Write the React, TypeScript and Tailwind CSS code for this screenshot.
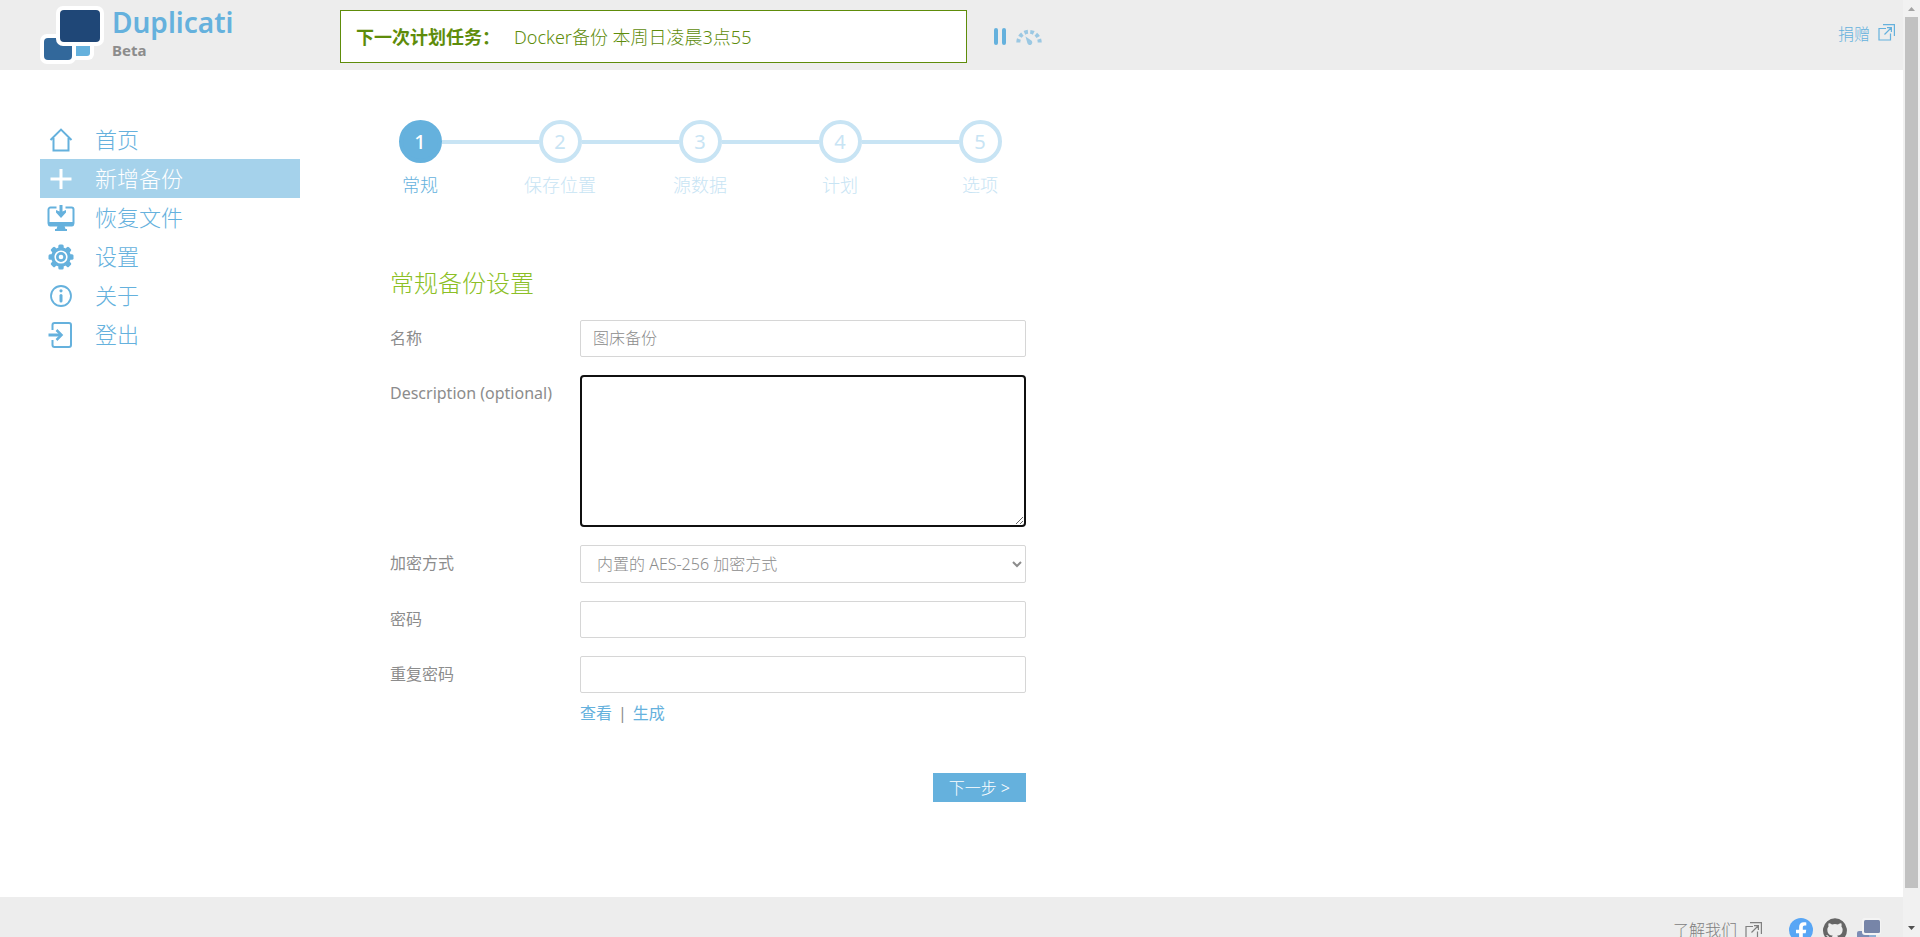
import React, { useState } from 'react'
import { clsx } from 'clsx'

interface IconProps {
  className?: string
}

const HomeIcon = ({ className }: IconProps) => (
  <svg viewBox="0 0 28 28" fill="none" stroke="currentColor" strokeWidth="2" className={className}>
    <path d="M3.500 14 14 3.600 24.500 14M6.500 12v12.500h15V12" />
  </svg>
)

const PlusIcon = ({ className }: IconProps) => (
  <svg viewBox="0 0 28 28" fill="none" stroke="currentColor" strokeWidth="3" className={className}>
    <path d="M14 4v20M3.500 14h21" />
  </svg>
)

const RestoreIcon = ({ className }: IconProps) => (
  <svg viewBox="0 0 28 28" className={className}>
    <path
      d="M9.500 3.500H3.500a2 2 0 0 0-2 2V19a2 2 0 0 0 2 2h21a2 2 0 0 0 2-2V5.500a2 2 0 0 0-2-2H18.500"
      fill="none"
      stroke="currentColor"
      strokeWidth="2"
    />
    <path d="M1 18h26v2.500a2 2 0 0 1-2 2H3a2 2 0 0 1-2-2z" fill="currentColor" />
    <path d="M10.500 22h7l1 3h1.500v2H8v-2h1.500z" fill="currentColor" />
    <path d="M12.500 1h3v6.500l3.500-1.500v2.500L14 14 9 8.500V6l3.500 1.500z" fill="currentColor" />
  </svg>
)

const GearIcon = ({ className }: IconProps) => (
  <svg viewBox="0 0 28 28" className={className}>
    <g fill="currentColor">
      {[0, 45, 90, 135].map((angle) => (
        <rect key={angle} x="11.300" y="1.500" width="5.400" height="25" rx="1.500" transform={`rotate(${angle} 14 14)`} />
      ))}
      <circle cx="14" cy="14" r="9.800" />
    </g>
    <circle cx="14" cy="14" r="5.800" fill="none" stroke="white" strokeWidth="1.600" />
    <circle cx="14" cy="14" r="2.300" fill="white" />
  </svg>
)

const InfoIcon = ({ className }: IconProps) => (
  <svg viewBox="0 0 28 28" fill="none" stroke="currentColor" className={className}>
    <circle cx="14" cy="14" r="10" strokeWidth="1.800" />
    <path d="M14 13.500v5.500" strokeWidth="3" strokeLinecap="round" />
    <circle cx="14" cy="8.800" r="1.600" fill="currentColor" stroke="none" />
  </svg>
)

const LogoutIcon = ({ className }: IconProps) => (
  <svg viewBox="0 0 28 28" fill="none" stroke="currentColor" strokeWidth="2" className={className}>
    <path d="M5.500 9V4a2 2 0 0 1 2-2H22a2 2 0 0 1 2 2v20a2 2 0 0 1-2 2H7.500a2 2 0 0 1-2-2v-5" />
    <path d="M1.500 14H13" strokeWidth="3" />
    <path d="m9.500 9 5 5-5 5" strokeWidth="2.500" />
  </svg>
)

const ExternalIcon = ({ className }: IconProps) => (
  <svg viewBox="0 0 17 17" fill="none" stroke="currentColor" strokeWidth="1.200" className={className}>
    <path d="M5 .6h11.400V12M8 4.500H1v11.500h11.500V9.500M6.500 10.500 13 4M9 3.600h4.400V8" />
  </svg>
)

const GaugeIcon = ({ className }: IconProps) => (
  <svg viewBox="0 0 26 16" fill="none" stroke="currentColor" className={className}>
    <path d="M2.300 13.500a10.700 10.700 0 0 1 21.400 0" strokeWidth="4" strokeDasharray="3.600 2.400" />
    <path d="m9.500 7.500 5.500 3.800a2.500 2.500 0 1 1-3.600 3z" fill="currentColor" stroke="none" />
  </svg>
)

const Logo = ({ className }: IconProps) => (
  <svg viewBox="0 0 64 58" className={className}>
    <rect x="26" y="32" width="28" height="22" rx="6" fill="white" />
    <rect x="30" y="34" width="20" height="16" rx="3" fill="#65b1dd" />
    <rect x="0" y="28" width="36" height="30" rx="7" fill="white" />
    <rect x="4" y="32" width="28" height="22" rx="4" fill="#32689b" />
    <rect x="16" y="0" width="48" height="40" rx="7" fill="white" />
    <rect x="20" y="4" width="40" height="32" rx="4" fill="#1f4777" />
  </svg>
)

const FooterLogo = ({ className }: IconProps) => (
  <svg viewBox="0 0 24 24" className={className}>
    <rect x="0" y="13" width="12" height="9" rx="2" fill="#7c8db5" />
    <rect x="12" y="14" width="7" height="6" rx="1" fill="#8fb0d4" />
    <rect x="5" y="0" width="19" height="17" rx="3" fill="#f4f4f4" />
    <rect x="7" y="2" width="16" height="13" rx="1.500" fill="#7785a8" />
  </svg>
)

const FacebookIcon = ({ className }: IconProps) => (
  <svg viewBox="0 0 24 24" className={className}>
    <circle cx="12" cy="12" r="12" fill="#58a6f5" />
    <path
      d="M10.100 24v-8.800H7v-3.500h3.100V9c0-3.100 1.800-4.800 4.600-4.800 1.300 0 2.600.2 2.600.2v3h-1.500c-1.500 0-2 .9-2 1.900v2.400h3.400l-.5 3.500h-2.900V24z"
      fill="white"
    />
  </svg>
)

const GithubIcon = ({ className }: IconProps) => (
  <svg viewBox="0 0 24 24" fill="#666666" className={className}>
    <path d="M12 .3a12 12 0 0 0-3.800 23.380c.6.120.83-.26.83-.57L9 21.070c-3.340.72-4.040-1.610-4.040-1.610-.55-1.390-1.340-1.760-1.340-1.760-1.080-.74.090-.73.090-.73 1.200.090 1.840 1.240 1.840 1.240 1.070 1.830 2.810 1.300 3.500 1 .1-.78.420-1.310.76-1.610-2.670-.3-5.470-1.330-5.470-5.930 0-1.310.47-2.380 1.240-3.220-.14-.3-.54-1.520.1-3.180 0 0 1-.32 3.300 1.230a11.500 11.500 0 0 1 6 0c2.280-1.550 3.290-1.230 3.290-1.230.64 1.660.24 2.880.12 3.180a4.650 4.650 0 0 1 1.230 3.220c0 4.610-2.800 5.630-5.480 5.920.42.360.81 1.100.81 2.220l-.01 3.290c0 .31.200.69.820.57A12 12 0 0 0 12 .3" />
  </svg>
)

const navItems = [
  { label: '首页', icon: HomeIcon },
  { label: '新增备份', icon: PlusIcon, active: true },
  { label: '恢复文件', icon: RestoreIcon },
  { label: '设置', icon: GearIcon },
  { label: '关于', icon: InfoIcon },
  { label: '登出', icon: LogoutIcon },
]

const steps = ['常规', '保存位置', '源数据', '计划', '选项']

const inputClass = 'w-full rounded-xs border border-[#d6d6d6] bg-white px-3 py-1 leading-[27px] text-[#8c8c8c] outline-none'

const Header = () => (
  <header className="flex h-[70px] shrink-0 items-start bg-[#ededed] pr-2 pl-10">
    <a href="#" className="flex w-[300px] shrink-0 gap-2 pt-1.5">
      <Logo className="h-[58px] w-16" />
      <span className="flex flex-col">
        <span className="text-[28px] leading-8 font-semibold text-[#65b1dd]">Duplicati</span>
        <span className="text-[15px] leading-6 font-bold text-[#8c8c8c]">Beta</span>
      </span>
    </a>
    <div className="mt-2.5 flex h-[53px] w-[627px] items-center gap-3.5 border border-[#5e8c0a] bg-white px-[15px] text-lg text-[#5e8c0a]">
      <strong className="font-bold">下一次计划任务：</strong>
      <span className="font-light">Docker备份 本周日凌晨3点55</span>
    </div>
    <div className="ml-[27px] flex h-[73px] items-center gap-2.5 text-[#65b1dd]">
      <button type="button" aria-label="暂停" className="flex gap-1">
        <span className="h-[17px] w-1 rounded-full bg-[#65b1dd]" />
        <span className="h-[17px] w-1 rounded-full bg-[#65b1dd]" />
      </button>
      <button type="button" aria-label="限速">
        <GaugeIcon className="h-4 w-[26px] opacity-60" />
      </button>
    </div>
    <a href="#" className="mt-[22px] ml-auto flex items-center gap-2 font-light text-[#65b1dd]">
      捐赠
      <ExternalIcon className="mb-1 size-[17px]" />
    </a>
  </header>
)

const Sidebar = () => (
  <nav className="w-[260px] shrink-0 pt-[50px]">
    <ul>
      {navItems.map(({ label, icon: Icon, active }) => (
        <li key={label}>
          <a
            href="#"
            className={clsx(
              'flex h-[39px] items-center gap-5 pl-[7px] text-[22px] font-light',
              active ? 'bg-[#a5d2eb] text-white' : 'text-[#65b1dd]'
            )}
          >
            <Icon className="size-7" />
            {label}
          </a>
        </li>
      ))}
    </ul>
  </nav>
)

const Stepper = () => (
  <ol className="-ml-10 flex">
    {steps.map((step, i) => (
      <li key={step} className={clsx('w-[140px]', i === 0 ? 'text-[#65b1dd]' : 'text-[#c8e4f4]')}>
        <div className="flex items-center">
          <span className={clsx('h-1 flex-1', i > 0 && 'bg-[#c8e4f4]')} />
          <span
            className={clsx(
              'flex size-[43px] items-center justify-center rounded-full border-4 text-xl',
              i === 0 ? 'border-[#65b1dd] bg-[#65b1dd] font-medium text-white' : 'border-[#c8e4f4] bg-white'
            )}
          >
            {i + 1}
          </span>
          <span className={clsx('h-1 flex-1', i < steps.length - 1 && 'bg-[#c8e4f4]')} />
        </div>
        <p className="mt-2 text-center text-lg font-light">{step}</p>
      </li>
    ))}
  </ol>
)

interface FieldProps {
  id: string
  label: string
  children: React.ReactNode
}

const Field: React.FC<FieldProps> = ({ id, label, children }) => (
  <div className="flex items-start">
    <label htmlFor={id} className="w-[190px] shrink-0 leading-[37px]">
      {label}
    </label>
    <div className="flex flex-1 flex-col">{children}</div>
  </div>
)

const BackupForm = () => {
  const [name, setName] = useState('图床备份')
  const [description, setDescription] = useState('')
  const [visible, setVisible] = useState(false)

  return (
    <form className="mt-[66px] w-[636px] text-[#8c8c8c]" onSubmit={(e) => e.preventDefault()}>
      <h2 className="text-2xl leading-9 font-light text-[#8cbf26]">常规备份设置</h2>
      <div className="mt-[19px] flex flex-col gap-[18px]">
        <Field id="name" label="名称">
          <input id="name" type="text" value={name} onChange={(e) => setName(e.target.value)} className={clsx(inputClass, 'font-light')} />
        </Field>
        <Field id="description" label="Description (optional)">
          <textarea
            id="description"
            value={description}
            onChange={(e) => setDescription(e.target.value)}
            className="h-[152px] w-full rounded-sm border-2 border-[#101010] px-3 py-1 outline-none"
          />
        </Field>
        <Field id="encryption" label="加密方式">
          <select id="encryption" className="h-[38px] w-full rounded-xs border border-[#d6d6d6] bg-white px-3 font-light outline-none">
            <option>内置的 AES-256 加密方式</option>
          </select>
        </Field>
        <Field id="password" label="密码">
          <input id="password" type={visible ? 'text' : 'password'} className={inputClass} />
        </Field>
        <Field id="repeat-password" label="重复密码">
          <input id="repeat-password" type={visible ? 'text' : 'password'} className={inputClass} />
          <div className="mt-2 flex gap-1.5 text-[#65b1dd]">
            <button type="button" onClick={() => setVisible(!visible)}>
              查看
            </button>
            <span className="text-[#8c8c8c]">|</span>
            <button type="button">生成</button>
          </div>
        </Field>
      </div>
      <div className="mt-12 flex justify-end">
        <button type="submit" className="h-[29px] bg-[#65b1dd] px-4 font-light text-white">
          下一步 &gt;
        </button>
      </div>
    </form>
  )
}

const Footer = () => (
  <footer className="flex h-20 shrink-0 items-start justify-end bg-[#ededed] pt-[21px] pr-[22px]">
    <a href="#" className="flex items-center gap-2 font-light text-[#808080]">
      了解我们
      <ExternalIcon className="size-[17px]" />
    </a>
    <div className="ml-[27px] flex gap-2.5">
      <a href="#" aria-label="Facebook">
        <FacebookIcon className="size-6" />
      </a>
      <a href="#" aria-label="GitHub">
        <GithubIcon className="size-6" />
      </a>
      <a href="#" aria-label="Duplicati">
        <FooterLogo className="size-6" />
      </a>
    </div>
  </footer>
)

const Scrollbar = () => (
  <div className="flex w-[17px] shrink-0 flex-col items-center justify-between bg-[#f1f1f1]" aria-hidden="true">
    <svg viewBox="0 0 17 17" className="size-[17px] shrink-0">
      <path d="M5 11h7L8.500 7z" fill="#a3a3a3" />
    </svg>
    <div className="mb-8 w-[13px] flex-1 bg-[#c1c1c1]" />
    <svg viewBox="0 0 17 17" className="size-[17px] shrink-0">
      <path d="M5 6h7l-3.500 4z" fill="#505050" />
    </svg>
  </div>
)

const App = () => (
  <div className="flex h-screen bg-white font-['Noto_Sans','Noto_Sans_CJK_SC',sans-serif] text-base">
    <div className="flex min-w-0 flex-1 flex-col overflow-hidden">
      <Header />
      <div className="flex shrink-0 pb-[95px] pl-10">
        <Sidebar />
        <main className="ml-[90px] flex-1 pt-[50px]">
          <Stepper />
          <BackupForm />
        </main>
      </div>
      <Footer />
    </div>
    <Scrollbar />
  </div>
)

export default App
